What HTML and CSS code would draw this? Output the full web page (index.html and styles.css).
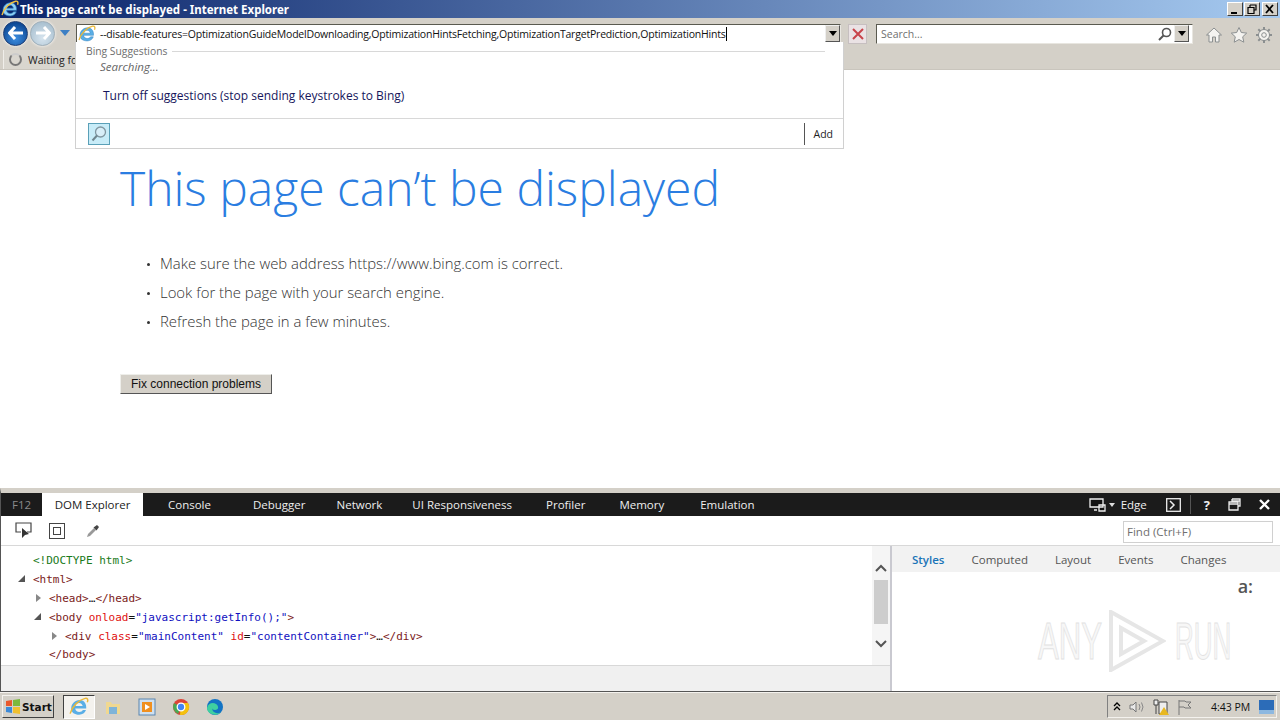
FILE: index.html
```html
<!DOCTYPE html>
<html lang="en">
<head>
    <meta charset="UTF-8">
    <meta name="viewport" content="width=device-width, initial-scale=1.0">
    <title>This page can't be displayed - Internet Explorer</title>
    <link rel="stylesheet" href="styles.css">
</head>
<body>

<div class="window">
    <!-- Title bar -->
    <div class="titlebar">
        <svg class="ie-logo" width="18" height="18" viewBox="0 0 18 18">
            <path d="M2 10.500C2 6 5.500 2.800 9.500 2.800c3.500 0 6 2.400 6 6.500v1H5.600c.2 2 1.700 3.200 3.700 3.200 1.500 0 2.600-.6 3.200-1.700h2.800c-1 2.700-3.200 4.100-6.100 4.100C5 15.900 2 13.800 2 10.500zM5.700 8.200h6.600c-.2-1.700-1.400-2.900-3.200-2.900-1.800 0-3.100 1.200-3.400 2.900z" fill="#8fd0f5" stroke="#2f80c0" stroke-width=".7"/>
            <path d="M1 15C3 8 9 2.500 14.500 1.200c2.200-.5 3 1.200 2 3.600" fill="none" stroke="#f0c040" stroke-width="1.400"/>
        </svg>
        <span class="title-text">This page can’t be displayed - Internet Explorer</span>
        <div class="win-buttons">
            <span class="win-btn"><svg width="12" height="11" viewBox="0 0 12 11"><rect x="2" y="8" width="6" height="2" fill="#000"/></svg></span>
            <span class="win-btn"><svg width="12" height="11" viewBox="0 0 12 11"><path d="M4 1h6v5H8M4 1v2M2 3.500h6v6H2z" fill="none" stroke="#000" stroke-width="1.200"/></svg></span>
            <span class="win-btn win-btn-close"><svg width="12" height="11" viewBox="0 0 12 11"><path d="M2 1l7 8M9 1l-7 8" stroke="#000" stroke-width="1.800"/></svg></span>
        </div>
    </div>

    <!-- Browser toolbar -->
    <div class="toolbar">
        <div class="nav-row">
            <div class="nav-buttons">
                <span class="nav-btn nav-back">
                    <svg width="16" height="14" viewBox="0 0 16 14"><path d="M7 1L1.500 7 7 13M2 7h13" fill="none" stroke="#fff" stroke-width="3"/></svg>
                </span>
                <span class="nav-btn nav-forward">
                    <svg width="16" height="14" viewBox="0 0 16 14"><path d="M9 1l5.500 6L9 13M14 7H1" fill="none" stroke="#fff" stroke-width="3"/></svg>
                </span>
                <svg class="nav-drop" width="10" height="6" viewBox="0 0 10 6"><path d="M0 0h10L5 6z" fill="#3d7fc4"/></svg>
            </div>
            <div class="address-box">
                <svg class="addr-logo" width="18" height="18" viewBox="0 0 18 18">
                    <path d="M2 10.500C2 6 5.500 2.800 9.500 2.800c3.500 0 6 2.400 6 6.500v1H5.600c.2 2 1.700 3.200 3.700 3.200 1.500 0 2.600-.6 3.200-1.700h2.800c-1 2.700-3.200 4.100-6.100 4.100C5 15.900 2 13.800 2 10.500zM5.700 8.200h6.600c-.2-1.700-1.400-2.900-3.200-2.900-1.800 0-3.100 1.200-3.400 2.900z" fill="#5aaee6" stroke="#2f80c0" stroke-width=".5"/>
                    <path d="M1 15C3 8 9 2.500 14.500 1.200c2.200-.5 3 1.200 2 3.600" fill="none" stroke="#eab93a" stroke-width="1.300"/>
                </svg>
                <span class="address-text">--disable-features=OptimizationGuideModelDownloading,OptimizationHintsFetching,OptimizationTargetPrediction,OptimizationHints</span>
                <span class="caret"></span>
                <span class="combo-arrow"></span>
            </div>
            <span class="stop-btn">
                <svg width="12" height="12" viewBox="0 0 12 12"><path d="M1 1l10 10M11 1L1 11" stroke="#c8444a" stroke-width="2"/></svg>
            </span>
            <div class="search-box">
                <span class="search-text">Search...</span>
                <svg class="search-glass" width="14" height="14" viewBox="0 0 14 14"><circle cx="8.500" cy="5.500" r="4" fill="none" stroke="#555" stroke-width="1.600"/><path d="M5.500 8.500L1 13" stroke="#555" stroke-width="2"/></svg>
                <span class="combo-arrow"></span>
            </div>
            <div class="tool-icons">
                <svg width="18" height="18" viewBox="0 0 18 18"><path d="M9 2L1.500 9H4v7h3.500v-5h3v5H14V9h2.500z" fill="#f4f3f0" stroke="#8b8f90" stroke-width="1"/></svg>
                <svg width="18" height="18" viewBox="0 0 18 18"><path d="M9 1.500l2.300 5 5.400.6-4 3.700 1.100 5.400L9 13.500l-4.800 2.700 1.100-5.400-4-3.700 5.400-.6z" fill="#f4f3f0" stroke="#8b8f90" stroke-width="1"/></svg>
                <svg width="18" height="18" viewBox="0 0 18 18"><circle cx="9" cy="9" r="5.500" fill="#f4f3f0" stroke="#8b8f90" stroke-width="1"/><circle cx="9" cy="9" r="2.300" fill="none" stroke="#8b8f90"/><path d="M9 1v3M9 14v3M1 9h3M14 9h3M3.300 3.300l2.100 2.100M12.600 12.600l2.100 2.100M14.700 3.300l-2.100 2.100M5.400 12.600l-2.100 2.100" stroke="#8b8f90" stroke-width="2"/></svg>
            </div>
        </div>
        <div class="tab-row">
            <div class="tab">
                <span class="spinner"></span>
                <span>Waiting fo</span>
            </div>
        </div>
    </div>

    <!-- Error page -->
    <div class="page">
        <h1>This page can’t be displayed</h1>
        <ul class="tips">
            <li>Make sure the web address https://www.bing.com is correct.</li>
            <li>Look for the page with your search engine.</li>
            <li>Refresh the page in a few minutes.</li>
        </ul>
        <button class="fix-btn">Fix connection problems</button>
    </div>

    <!-- Address bar dropdown -->
    <div class="suggest">
        <div class="suggest-body">
            <div class="suggest-head"><span>Bing Suggestions</span><span class="suggest-line"></span></div>
            <div class="searching">Searching...</div>
            <div class="turn-off">Turn off suggestions (stop sending keystrokes to Bing)</div>
        </div>
        <div class="suggest-foot">
            <span class="bing-btn">
                <svg width="18" height="18" viewBox="0 0 18 18"><circle cx="10.500" cy="7" r="5" fill="#d8eef8" stroke="#8096a0" stroke-width="1.300"/><path d="M7 10.500L2.500 15.500" stroke="#6f868f" stroke-width="2"/></svg>
            </span>
            <span class="add-btn">Add</span>
        </div>
    </div>

    <!-- F12 developer tools -->
    <div class="devtools">
        <div class="dev-tabs">
            <span class="f12">F12</span>
            <span class="dev-tab dev-tab-on">DOM Explorer</span>
            <span class="dev-tab tab-console">Console</span>
            <span class="dev-tab tab-debugger">Debugger</span>
            <span class="dev-tab tab-network">Network</span>
            <span class="dev-tab tab-ui">UI Responsiveness</span>
            <span class="dev-tab tab-profiler">Profiler</span>
            <span class="dev-tab tab-memory">Memory</span>
            <span class="dev-tab tab-emulation">Emulation</span>
            <div class="dev-right">
                <svg width="17" height="14" viewBox="0 0 17 14"><path d="M1 1h13v8H1zM5 12h3M10 7h6v6h-6z" fill="#111" stroke="#eee" stroke-width="1.300"/></svg>
                <span class="mini-arrow"></span>
                <span class="edge-label">Edge</span>
                <svg class="dev-console" width="15" height="14" viewBox="0 0 15 14"><rect x=".7" y=".7" width="13.600" height="12.600" fill="none" stroke="#eee" stroke-width="1.300"/><path d="M4 3l4 4-4 4" fill="none" stroke="#eee" stroke-width="1.500"/></svg>
                <span class="dev-sep"></span>
                <span class="dev-help">?</span>
                <svg width="13" height="13" viewBox="0 0 13 13"><path d="M4 1h8v7H10M1 4h9v8H1zM1 6h9M4 1v3M4 3h8" fill="none" stroke="#eee" stroke-width="1.300"/></svg>
                <svg width="11" height="11" viewBox="0 0 11 11"><path d="M1 1l9 9M10 1l-9 9" stroke="#fff" stroke-width="2.400"/></svg>
            </div>
        </div>
        <div class="dev-tools-row">
            <svg width="17" height="17" viewBox="0 0 17 17"><path d="M6 10H1V1h15v9h-4" fill="none" stroke="#444" stroke-width="1.200"/><path d="M7 6l0 10 3-3 4-1z" fill="#333"/></svg>
            <svg width="16" height="16" viewBox="0 0 16 16"><rect x=".5" y=".5" width="15" height="15" fill="none" stroke="#444"/><rect x="4.500" y="4.500" width="7" height="7" fill="none" stroke="#444"/></svg>
            <svg class="dropper" width="14" height="14" viewBox="0 0 14 14"><path d="M1 13l1-3 6-6 2 2-6 6z" fill="#999"/><path d="M7.500 3.500L11 1l2 2-2.500 3.500z" fill="#444"/></svg>
            <input class="find-box" type="text" placeholder="Find (Ctrl+F)">
        </div>
        <div class="dev-main">
            <div class="dom-pane">
                <div class="dom-view">
                    <div class="dom-tree">
                        <div class="line indent-0"><span class="doctype">&lt;!DOCTYPE html&gt;</span></div>
                        <div class="line indent-0"><span class="open-arrow"></span><span class="tag">&lt;html&gt;</span></div>
                        <div class="line indent-1"><span class="closed-arrow"></span><span class="tag">&lt;head&gt;</span>…<span class="tag">&lt;/head&gt;</span></div>
                        <div class="line indent-1"><span class="open-arrow"></span><span class="tag">&lt;body</span> <span class="attr">onload</span>=<span class="val">"javascript:getInfo();"</span><span class="tag">&gt;</span></div>
                        <div class="line indent-2"><span class="closed-arrow"></span><span class="tag">&lt;div</span> <span class="attr">class</span>=<span class="val">"mainContent"</span> <span class="attr">id</span>=<span class="val">"contentContainer"</span><span class="tag">&gt;</span>…<span class="tag">&lt;/div&gt;</span></div>
                        <div class="line indent-1b"><span class="tag">&lt;/body&gt;</span></div>
                    </div>
                    <div class="dom-scroll">
                        <svg width="12" height="8" viewBox="0 0 12 8"><path d="M1 7l5-5 5 5" fill="none" stroke="#555" stroke-width="2"/></svg>
                        <span class="thumb"></span>
                        <svg class="scroll-down" width="12" height="8" viewBox="0 0 12 8"><path d="M1 1l5 5 5-5" fill="none" stroke="#555" stroke-width="2"/></svg>
                    </div>
                </div>
                <div class="dom-foot"></div>
            </div>
            <div class="side-pane">
                <div class="side-tabs">
                    <span class="side-tab side-on">Styles</span>
                    <span class="side-tab">Computed</span>
                    <span class="side-tab">Layout</span>
                    <span class="side-tab">Events</span>
                    <span class="side-tab">Changes</span>
                </div>
                <div class="side-body">
                    <span class="pseudo">a:</span>
                    <div class="watermark">
                        <span class="wm-any">ANY</span>
                        <svg width="58" height="62" viewBox="0 0 58 62"><path d="M3 2v58l52-29z M13 18v26l23-13z" fill="none" stroke="#e6e6e6" stroke-width="4"/></svg>
                        <span class="wm-run">RUN</span>
                    </div>
                </div>
            </div>
        </div>
    </div>

    <!-- Windows taskbar -->
    <div class="taskbar">
        <span class="start-btn">
            <svg width="16" height="15" viewBox="0 0 16 15"><path d="M1 2l6-1v6H1z" fill="#e8582c"/><path d="M8 1l7-1v7H8z" fill="#7cb83c"/><path d="M1 8h6v6l-6-1z" fill="#3c8ad8"/><path d="M8 8h7v7l-7-1z" fill="#f0c030"/></svg>
            Start
        </span>
        <span class="task-item task-on">
            <svg width="20" height="20" viewBox="0 0 18 18"><path d="M2 10.500C2 6 5.500 2.800 9.500 2.800c3.500 0 6 2.400 6 6.500v1H5.600c.2 2 1.700 3.200 3.700 3.200 1.500 0 2.600-.6 3.200-1.700h2.800c-1 2.700-3.200 4.100-6.100 4.100C5 15.900 2 13.800 2 10.500zM5.700 8.200h6.600c-.2-1.700-1.400-2.900-3.200-2.900-1.800 0-3.100 1.200-3.400 2.900z" fill="#5aaee6"/><path d="M1 15C3 8 9 2.500 14.500 1.200c2.200-.5 3 1.200 2 3.600" fill="none" stroke="#eab93a" stroke-width="1.300"/></svg>
        </span>
        <span class="task-item">
            <svg width="18" height="18" viewBox="0 0 18 18"><path d="M2 4h5l1 2h8v10H2z" fill="#f0d890"/><rect x="5" y="9" width="8" height="7" fill="#7fb4d8"/></svg>
        </span>
        <span class="task-item">
            <svg width="18" height="18" viewBox="0 0 18 18"><rect x="1" y="1" width="16" height="16" fill="#cfe0f0" stroke="#5a86b0"/><rect x="4" y="4" width="10" height="10" fill="#f09020"/><path d="M7 6l5 3-5 3z" fill="#fff"/></svg>
        </span>
        <span class="task-item">
            <svg width="18" height="18" viewBox="0 0 18 18"><circle cx="9" cy="9" r="8" fill="#dc4437"/><path d="M9 9L2 5a8 8 0 0 0 4 11z" fill="#4aa853"/><path d="M9 5h7a8 8 0 0 1-8 12z" fill="#f4c20d"/><circle cx="9" cy="9" r="3.800" fill="#4285f4" stroke="#fff" stroke-width="1.300"/></svg>
        </span>
        <span class="task-item">
            <svg width="18" height="18" viewBox="0 0 18 18"><circle cx="9" cy="9" r="8" fill="#1273c4"/><path d="M1 10c1-5 6-6 9-4s3 6-1 6c-2 0-3-1-3-2 0 4 5 7 9 4-2 2.500-5 3-7 2.500C4 16 1 13.500 1 10z" fill="#3fd0a0"/></svg>
        </span>
        <div class="tray">
            <svg width="8" height="10" viewBox="0 0 8 10"><path d="M1 4l3-3 3 3M1 8l3-3 3 3" fill="none" stroke="#000" stroke-width="1.300"/></svg>
            <svg width="16" height="14" viewBox="0 0 16 14"><path d="M1 5h3l3-3v10l-3-3H1z" fill="#e8e8e8" stroke="#777"/><path d="M10 4q2 3 0 6M12.500 2.500q3 4.500 0 9" fill="none" stroke="#888"/></svg>
            <svg width="16" height="16" viewBox="0 0 16 16"><path d="M1 1h4v5H1zM3 6v9M6 3h8v12H6z" fill="#eee" stroke="#444"/><path d="M11 8l5 8H6z" fill="#e8b820"/></svg>
            <svg width="15" height="16" viewBox="0 0 15 16"><path d="M2 1v15M2 2h6l1 1h5l-3 3 3 3H8L7 8H2" fill="none" stroke="#777"/></svg>
            <span class="clock">4:43 PM</span>
            <svg class="desk-btn" width="15" height="14" viewBox="0 0 15 14"><rect width="15" height="14" fill="#2c6cb8"/><rect y="10" width="15" height="4" fill="#8db8e0"/></svg>
        </div>
    </div>
</div>

</body>
</html>
```

FILE: styles.css
```css
* {
    box-sizing: border-box;
}
html, body {
    margin: 0;
    height: 100%;
    overflow: hidden;
}
body {
    font-family: "Open Sans", sans-serif;
    background-color: #fff;
    color: #000;
}
.window {
    position: relative;
    width: 1280px;
    height: 720px;
    display: flex;
    flex-direction: column;
}

/* Title bar */
.titlebar {
    height: 18px;
    display: flex;
    align-items: center;
    background: linear-gradient(to right, #0a246a, #a6caf0);
    color: #fff;
    padding-right: 2px;
}
.ie-logo {
    flex: none;
    margin: 0 1px;
}
.title-text {
    font-family: "Noto Sans", sans-serif;
    font-weight: bold;
    font-size: 11.500px;
    white-space: nowrap;
}
.win-buttons {
    margin-left: auto;
    display: flex;
    gap: 0;
}
.win-btn {
    width: 16px;
    height: 14px;
    margin-left: 1px;
    background-color: #d4d0c8;
    border: 1px solid;
    border-color: #fff #404040 #404040 #fff;
    display: flex;
    align-items: center;
    justify-content: center;
}
.win-btn svg {
    flex: none;
}
.win-btn-close {
    margin-left: 2px;
}

/* Toolbar */
.toolbar {
    height: 52px;
    background-color: #d4d0c8;
    border-bottom: 1px solid #c9c5bd;
}
.nav-row {
    height: 30px;
    display: flex;
    align-items: center;
}
.nav-buttons {
    width: 76px;
    height: 30px;
    flex: none;
    display: flex;
    align-items: center;
    padding-left: 3px;
}
.nav-btn {
    width: 25px;
    height: 25px;
    border-radius: 50%;
    display: flex;
    align-items: center;
    justify-content: center;
    flex: none;
    box-shadow: 0 0 3px #fff;
}
.nav-back {
    background: radial-gradient(circle at 50% 70%, #3d8ee0, #0e4a96 75%);
    border: 1px solid #1d3f78;
}
.nav-forward {
    margin-left: 2px;
    background: radial-gradient(circle at 50% 70%, #d6e4ee, #a9c0d0 80%);
    border: 1px solid #9fb0bc;
}
.nav-drop {
    margin-left: 5px;
    flex: none;
}
.address-box {
    width: 765px;
    height: 20px;
    flex: none;
    background-color: #fff;
    border: 1px solid;
    border-color: #5a5a50 #e8e6e0 #e8e6e0 #5a5a50;
    display: flex;
    align-items: center;
    padding-left: 1px;
    margin-top: 1px;
}
.addr-logo {
    flex: none;
}
.address-text {
    font-size: 10.5px;
    letter-spacing: -0.2px;
    margin-left: 4px;
    white-space: nowrap;
    color: #111;
}
.caret {
    width: 1px;
    height: 14px;
    background-color: #000;
    flex: none;
}
.combo-arrow {
    margin-left: auto;
    width: 15px;
    height: 17px;
    flex: none;
    background-color: #d4d0c8;
    border: 1px solid;
    border-color: #eee #555 #555 #eee;
    position: relative;
}
.combo-arrow::after {
    content: "";
    position: absolute;
    left: 3px;
    top: 5px;
    border-style: solid;
    border-width: 5px 4px 0;
    border-color: #000 transparent transparent;
}
.stop-btn {
    width: 19px;
    height: 20px;
    margin-left: 7px;
    margin-top: 1px;
    background-color: #eae2e4;
    border: 1px solid #c6bfc0;
    display: flex;
    align-items: center;
    justify-content: center;
    flex: none;
}
.search-box {
    width: 317px;
    height: 20px;
    flex: none;
    margin-left: 9px;
    margin-top: 1px;
    background-color: #fff;
    border: 1px solid;
    border-color: #5a5a50 #e8e6e0 #e8e6e0 #5a5a50;
    display: flex;
    align-items: center;
    padding: 0 3px 0 4px;
}
.search-text {
    font-size: 10.5px;
    color: #6f6f6f;
}
.search-glass {
    margin-left: auto;
    flex: none;
}
.search-box .combo-arrow {
    margin-left: 2px;
}
.tool-icons {
    margin-left: 12px;
    display: flex;
    gap: 7px;
    padding-top: 4px;
}
.tab-row {
    height: 21px;
    display: flex;
    padding: 2px 0 0 3px;
}
.tab {
    width: 73px;
    height: 19px;
    padding-left: 5px;
    display: flex;
    align-items: center;
    gap: 6px;
    font-size: 10.5px;
    color: #222;
    white-space: nowrap;
    background-color: #d9d6cf;
    border-left: 1px solid #f0eeea;
}
.spinner {
    width: 13px;
    height: 13px;
    flex: none;
    border-radius: 50%;
    border: 2px solid #777;
    border-top-color: #ccc;
}

/* Error page */
.page {
    height: 418px;
    padding: 83px 0 0 120px;
    background-color: #fff;
    flex: none;
}
.page h1 {
    margin: 0;
    font-size: 48px;
    line-height: 70px;
    font-weight: 300;
    color: #2a7de1;
    white-space: nowrap;
}
.tips {
    list-style: none;
    margin: 26px 0 0;
    padding: 0 0 0 40px;
    font-size: 14.900px;
    font-weight: 300;
    color: #333;
}
.tips li {
    height: 29px;
    line-height: 29px;
    position: relative;
}
.tips li::before {
    content: "";
    position: absolute;
    left: -13px;
    top: 14px;
    width: 3px;
    height: 3px;
    border-radius: 50%;
    background-color: #333;
}
.fix-btn {
    display: block;
    margin-top: 38px;
    width: 152px;
    height: 20px;
    padding: 0;
    font-family: "Liberation Sans", Arial, sans-serif;
    font-size: 12px;
    color: #111;
    background-color: #d4d0c8;
    border: 1px solid;
    border-color: #eeeeea #555 #555 #eeeeea;
}

/* Suggestions dropdown */
.suggest {
    position: absolute;
    left: 75px;
    top: 42px;
    width: 769px;
    height: 107px;
    background-color: #fff;
    border: 1px solid #d0d0d0;
    border-top: none;
    display: flex;
    flex-direction: column;
}
.suggest-body {
    height: 77px;
    padding: 2px 18px 0 10px;
    border-bottom: 1px solid #d8d8d8;
}
.suggest-head {
    display: flex;
    align-items: center;
    gap: 5px;
    font-size: 10.3px;
    line-height: 14px;
    color: #6d6d6d;
}
.suggest-line {
    flex: 1;
    height: 1px;
    background-color: #d8d8d8;
}
.searching {
    margin: 1px 0 0 14px;
    font-size: 11.5px;
    line-height: 16px;
    font-style: italic;
    color: #666;
}
.turn-off {
    margin: 13px 0 0 17px;
    font-size: 12px;
    line-height: 16px;
    color: #16165c;
}
.suggest-foot {
    flex: 1;
    display: flex;
    align-items: center;
    padding: 0 10px 0 12px;
}
.bing-btn {
    width: 22px;
    height: 22px;
    border: 1px solid #5aa0b8;
    background-color: #c8ecf8;
    display: flex;
    align-items: center;
    justify-content: center;
}
.add-btn {
    margin-left: auto;
    border-left: 1px solid #555;
    height: 22px;
    padding-left: 9px;
    font-size: 10.5px;
    line-height: 22px;
    color: #222;
}

/* Developer tools */
.devtools {
    height: 204px;
    flex: none;
    display: flex;
    flex-direction: column;
    background-color: #fff;
    border-top: 5px solid #d4d0c8;
    border-left: 1px solid #555;
    border-bottom: 1px solid #555;
}
.dev-tabs {
    height: 23px;
    flex: none;
    background-color: #1b1b1b;
    color: #eee;
    font-size: 11.500px;
    display: flex;
    align-items: center;
}
.f12 {
    width: 41px;
    text-align: center;
    color: #8a8a8a;
}
.dev-tab {
    height: 23px;
    line-height: 23px;
    white-space: nowrap;
}
.dev-tab-on {
    width: 101px;
    text-align: center;
    background-color: #fff;
    color: #222;
}
.tab-console { margin-left: 25px; }
.tab-debugger { margin-left: 42px; }
.tab-network { margin-left: 31px; }
.tab-ui { margin-left: 30px; }
.tab-profiler { margin-left: 34px; }
.tab-memory { margin-left: 34px; }
.tab-emulation { margin-left: 36px; }
.dev-right {
    margin-left: auto;
    display: flex;
    align-items: center;
    padding-right: 10px;
}
.mini-arrow {
    margin-left: 3px;
    border-style: solid;
    border-width: 4px 3px 0;
    border-color: #ddd transparent transparent;
}
.edge-label {
    margin-left: 6px;
}
.dev-console {
    margin-left: 19px;
}
.dev-sep {
    width: 1px;
    height: 19px;
    margin-left: 9px;
    background-color: #555;
}
.dev-help {
    margin: 0 18px 0 13px;
    font-weight: bold;
    font-size: 13px;
}
.dev-right svg:last-child {
    margin-left: 18px;
}
.dev-tools-row {
    height: 30px;
    flex: none;
    display: flex;
    align-items: center;
    padding: 0 7px 0 14px;
    border-bottom: 1px solid #d8d8d8;
}
.dev-tools-row svg {
    flex: none;
}
.dev-tools-row svg + svg {
    margin-left: 17px;
}
.dev-tools-row .dropper {
    margin-left: 21px;
}
.find-box {
    margin-left: auto;
    margin-top: 2px;
    width: 150px;
    height: 22px;
    padding: 0 3px;
    border: 1px solid #d0d0d0;
    font-family: "Open Sans", sans-serif;
    font-size: 11.500px;
    outline: none;
}
.find-box::placeholder {
    color: #6f6f6f;
    opacity: 1;
}
.dev-main {
    flex: 1;
    display: flex;
    min-height: 0;
}
.dom-pane {
    width: 891px;
    flex: none;
    display: flex;
    flex-direction: column;
    border-right: 2px solid #c9c9d0;
}
.dom-view {
    height: 120px;
    flex: none;
    display: flex;
    border-bottom: 1px solid #d8d8d8;
}
.dom-tree {
    flex: 1;
    padding-top: 5px;
    font-family: "DejaVu Sans Mono", monospace;
    font-size: 11px;
    color: #111;
}
.line {
    height: 19px;
    line-height: 19px;
    white-space: nowrap;
    position: relative;
}
.indent-0 { padding-left: 32px; }
.indent-1 { padding-left: 48px; }
.indent-1b { padding-left: 48px; margin-top: -1px; }
.indent-2 { padding-left: 64px; }
.doctype { color: #1a7a1a; }
.tag { color: #7a1a1a; }
.attr { color: #e01010; }
.val { color: #1010c0; }
.open-arrow {
    position: absolute;
    margin-left: -15px;
    margin-top: 5px;
    width: 0;
    height: 0;
    border-style: solid;
    border-width: 0 0 7px 7px;
    border-color: transparent transparent #555;
}
.closed-arrow {
    position: absolute;
    margin-left: -13px;
    margin-top: 5px;
    width: 0;
    height: 0;
    border-left: 5px solid #888;
    border-top: 4px solid transparent;
    border-bottom: 4px solid transparent;
}
.dom-scroll {
    width: 18px;
    flex: none;
    background-color: #f5f5f5;
    display: flex;
    flex-direction: column;
    align-items: center;
    padding-top: 18px;
}
.thumb {
    width: 14px;
    height: 44px;
    margin-top: 8px;
    background-color: #cdcdcd;
    flex: none;
}
.scroll-down {
    margin-top: 16px;
}
.dom-foot {
    flex: 1;
    background-color: #f0f0f0;
}
.side-pane {
    flex: 1;
    display: flex;
    flex-direction: column;
    min-width: 0;
}
.side-tabs {
    height: 26px;
    flex: none;
    background-color: #f2f2f2;
    display: flex;
    align-items: center;
    font-size: 11.500px;
    color: #555;
    padding-left: 20px;
    gap: 27px;
}
.side-on {
    color: #1a74b8;
    font-weight: 600;
}
.side-body {
    flex: 1;
    position: relative;
}
.pseudo {
    position: absolute;
    right: 27px;
    top: 2px;
    font-size: 18px;
    line-height: 24px;
    font-weight: 600;
    color: #555;
}
.watermark {
    position: absolute;
    left: 146px;
    top: 38px;
    width: 195px;
    height: 62px;
    display: flex;
    align-items: center;
    font-family: "Liberation Sans", Arial, sans-serif;
    font-size: 52px;
    color: #f7f7f7;
    -webkit-text-stroke: 1px #e2e2e2;
}
.watermark svg {
    flex: none;
    margin-left: 6px;
}
.watermark span {
    flex: none;
    transform-origin: left center;
}
.wm-any {
    width: 64px;
    transform: scaleX(0.6);
}
.wm-run {
    width: 60px;
    margin-left: 9px;
    transform: scaleX(0.5);
}

/* Taskbar */
.taskbar {
    flex: 1;
    background-color: #d4d0c8;
    border-top: 1px solid #f4f2ee;
    display: flex;
    align-items: center;
    padding-left: 2px;
}
.start-btn {
    width: 52px;
    height: 23px;
    border: 1px solid;
    border-color: #f4f2ee #404040 #404040 #f4f2ee;
    display: flex;
    align-items: center;
    gap: 1px;
    padding-left: 2px;
    font-family: "DejaVu Sans", sans-serif;
    font-weight: bold;
    font-size: 10.5px;
    color: #111;
}
.task-item {
    width: 34px;
    height: 24px;
    display: flex;
    align-items: center;
    justify-content: center;
    flex: none;
}
.task-on {
    width: 32px;
    margin: 0 1px 0 9px;
    background-color: #f4f2ee;
    border: 1px solid;
    border-color: #404040 #fff #fff #404040;
}
.tray {
    margin-left: auto;
    margin-right: 3px;
    width: 170px;
    height: 23px;
    border: 1px solid;
    border-color: #808080 #f4f2ee #f4f2ee #808080;
    display: flex;
    align-items: center;
    padding-left: 5px;
    gap: 8px;
}
.clock {
    margin-left: 11px;
    font-size: 10.5px;
    color: #111;
    white-space: nowrap;
}
.desk-btn {
    margin-left: auto;
    margin-right: 2px;
}
```
